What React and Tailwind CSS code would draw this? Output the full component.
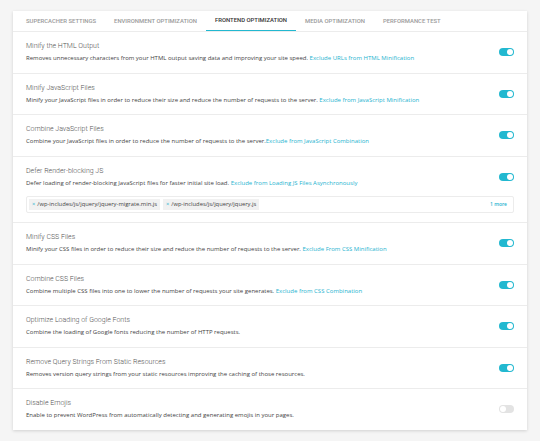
import React from 'react';

const tabs = [
  'SUPERCACHER SETTINGS',
  'ENVIRONMENT OPTIMIZATION',
  'FRONTEND OPTIMIZATION',
  'MEDIA OPTIMIZATION',
  'PERFORMANCE TEST',
];

const rows = [
  {
    title: 'Minify the HTML Output',
    desc: 'Removes unnecessary characters from your HTML output saving data and improving your site speed. ',
    link: 'Exclude URLs from HTML Minification',
    on: true,
  },
  {
    title: 'Minify JavaScript Files',
    desc: 'Minify your JavaScript files in order to reduce their size and reduce the number of requests to the server. ',
    link: 'Exclude from JavaScript Minification',
    on: true,
  },
  {
    title: 'Combine JavaScript Files',
    desc: 'Combine your JavaScript files in order to reduce the number of requests to the server.',
    link: 'Exclude from JavaScript Combination',
    on: true,
  },
  {
    title: 'Defer Render-blocking JS',
    desc: 'Defer loading of render-blocking JavaScript files for faster initial site load. ',
    link: 'Exclude from Loading JS Files Asynchronously',
    on: true,
    tags: ['/wp-includes/js/jquery/jquery-migrate.min.js', '/wp-includes/js/jquery/jquery.js'],
  },
  {
    title: 'Minify CSS Files',
    desc: 'Minify your CSS files in order to reduce their size and reduce the number of requests to the server. ',
    link: 'Exclude From CSS Minification',
    on: true,
  },
  {
    title: 'Combine CSS Files',
    desc: 'Combine multiple CSS files into one to lower the number of requests your site generates. ',
    link: 'Exclude from CSS Combination',
    on: true,
  },
  {
    title: 'Optimize Loading of Google Fonts',
    desc: 'Combine the loading of Google fonts reducing the number of HTTP requests.',
    on: true,
  },
  {
    title: 'Remove Query Strings From Static Resources',
    desc: 'Removes version query strings from your static resources improving the caching of those resources.',
    on: true,
  },
  {
    title: 'Disable Emojis',
    desc: 'Enable to prevent WordPress from automatically detecting and generating emojis in your pages.',
    on: false,
  },
];

function Toggle({ on }) {
  return (
    <div
      className={
        'w-[15px] h-[8px] rounded-full flex items-center px-[1px] ' +
        (on ? 'bg-[#22b8d0] justify-end' : 'bg-[#e3e3e3] justify-start')
      }
    >
      <div className="w-[6px] h-[6px] rounded-full bg-white" />
    </div>
  );
}

function Row({ row, last }) {
  return (
    <div className={'px-[13px] ' + (last ? '' : 'border-b border-[#ececec]')}>
      <div className="flex items-center justify-between h-[40.5px]">
        <div className="flex flex-col">
          <div className="text-[7px] leading-[10px] text-[#555] font-['Roboto',sans-serif] font-light">
            {row.title}
          </div>
          <div className="mt-[2px] text-[6px] leading-[10px] text-[#444] font-['Open_Sans',sans-serif]">
            {row.desc}
            {row.link && <span className="text-[#26b3cf]">{row.link}</span>}
          </div>
        </div>
        <Toggle on={row.on} />
      </div>
      {row.tags && (
        <div className="mb-[9px] -mt-[1px] h-[17px] border border-[#ececec] rounded-[2px] flex items-center justify-between px-[2px]">
          <div className="flex gap-[3px]">
            {row.tags.map((t) => (
              <span
                key={t}
                className="bg-[#f1f1f1] px-[3px] h-[11px] flex items-center gap-[2px] text-[5.8px] text-[#444] font-['Open_Sans',sans-serif]"
              >
                <span className="text-[#26b3cf]">×</span>
                {t}
              </span>
            ))}
          </div>
          <span className="mr-[4px] text-[5px] text-[#26b3cf] font-['Open_Sans',sans-serif] font-semibold">1 more</span>
        </div>
      )}
    </div>
  );
}

export default function App() {
  return (
    <div className="w-[540px] h-[441px] bg-[#f5f5f5] pt-[11px] pl-[13px]">
      <div className="w-[514px] bg-white shadow-[0_1px_3px_rgba(0,0,0,0.15)]">
        <div className="h-[21px] flex border-b border-[#ececec] pl-[4px] font-['Roboto',sans-serif] text-[5.9px] font-medium">
          {tabs.map((t, i) => (
            <div
              key={t}
              className={
                'h-full flex items-center px-[9px] ' +
                (i === 2 ? 'text-[#333] border-b-[1px] border-[#22b8d0] -mb-px' : 'text-[#9a9a9a]')
              }
            >
              {t}
            </div>
          ))}
        </div>
        {rows.map((r, i) => (
          <Row key={r.title} row={r} last={i === rows.length - 1} />
        ))}
      </div>
    </div>
  );
}
